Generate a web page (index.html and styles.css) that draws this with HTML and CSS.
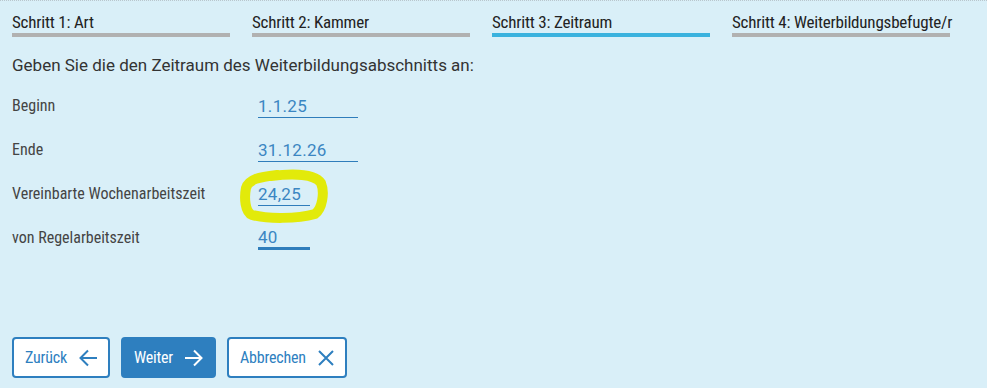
FILE: index.html
```html
<!DOCTYPE html>
<html lang="de">
<head>
  <meta charset="UTF-8">
  <meta name="viewport" content="width=device-width, initial-scale=1.0">
  <title>Weiterbildungsabschnitt</title>
  <link rel="stylesheet" href="styles.css">
</head>
<body>
  <div class="wizard">
    <div class="steps">
      <div class="step">Schritt 1: Art</div>
      <div class="step">Schritt 2: Kammer</div>
      <div class="step active">Schritt 3: Zeitraum</div>
      <div class="step">Schritt 4: Weiterbildungsbefugte/r</div>
    </div>

    <p class="intro">Geben Sie die den Zeitraum des Weiterbildungsabschnitts an:</p>

    <div class="form">
      <div class="row">
        <label for="beginn">Beginn</label>
        <input id="beginn" class="field" type="text" value="1.1.25">
      </div>
      <div class="row">
        <label for="ende">Ende</label>
        <input id="ende" class="field" type="text" value="31.12.26">
      </div>
      <div class="row">
        <label for="woche">Vereinbarte Wochenarbeitszeit</label>
        <div class="marked">
          <input id="woche" class="field short" type="text" value="24,25">
          <!-- hand-drawn marker around the value -->
          <svg class="scribble" width="92" height="56" viewBox="0 0 92 56">
            <path d="M32 7 C55 4 76 5 82 14 C86 24 83 40 76 45 C58 50 28 50 13 46 C6 43 5 29 7 19 C10 10 20 8 38 6"
                  fill="none" stroke="#e2ea0a" stroke-width="10" stroke-linecap="round"/>
          </svg>
        </div>
      </div>
      <div class="row">
        <label for="regel">von Regelarbeitszeit</label>
        <input id="regel" class="field short focus" type="text" value="40">
      </div>
    </div>

    <div class="actions">
      <button class="btn">Zurück
        <svg width="18" height="18" viewBox="0 0 18 18"><path d="M18 9H1.5M9 1.5L1.5 9 9 16.5" fill="none" stroke="currentColor" stroke-width="2"/></svg>
      </button>
      <button class="btn primary">Weiter
        <svg width="18" height="18" viewBox="0 0 18 18"><path d="M0 9h16.5M9 1.5L16.5 9 9 16.5" fill="none" stroke="currentColor" stroke-width="2"/></svg>
      </button>
      <button class="btn">Abbrechen
        <svg width="16" height="16" viewBox="0 0 16 16"><path d="M1 1l14 14M15 1L1 15" fill="none" stroke="currentColor" stroke-width="2"/></svg>
      </button>
    </div>
  </div>
</body>
</html>
```

FILE: styles.css
```css
body {
  margin: 0;
  padding: 0;
  background-color: #d9eff8;
  color: #333;
  font-family: Roboto, sans-serif;
}
.wizard {
  height: 388px;
  box-sizing: border-box;
  border-top: 1px dotted #b9c6cd;
  padding: 0 12px;
  display: flex;
  flex-direction: column;
}
.steps {
  display: grid;
  grid-template-columns: repeat(4, 218px);
  column-gap: 22px;
  padding-top: 11px;
}
.step {
  font-family: 'Roboto Condensed', sans-serif;
  font-size: 17px;
  line-height: 20px;
  letter-spacing: -0.2px;
  color: #222;
  white-space: nowrap;
  padding-bottom: 1px;
  border-bottom: 4px solid #b1b1b1;
}
.step.active {
  border-bottom-color: #3ab2de;
}
.intro {
  font-size: 17px;
  color: #333;
  margin: 18px 0 0;
  line-height: 20px;
}
.form {
  margin-top: -1px;
}
.row {
  display: flex;
  align-items: flex-end;
  height: 44px;
}
.row label {
  width: 246px;
  font-family: 'Roboto Condensed', sans-serif;
  font-size: 16px;
  color: #444;
  padding-bottom: 3px;
}
.field {
  font-family: Roboto, sans-serif;
  font-size: 17px;
  letter-spacing: 0.3px;
  color: #3b86c2;
  background: transparent;
  border: none;
  border-bottom: 1px solid #2f7dbb;
  padding: 0 0 1px;
  width: 100px;
  outline: none;
}
.field.short {
  width: 52px;
}
.field.focus {
  border-bottom-width: 3px;
  padding-bottom: 0;
}
.marked {
  position: relative;
}
.scribble {
  position: absolute;
  left: -19px;
  top: -15px;
  pointer-events: none;
}
.actions {
  margin-top: auto;
  margin-bottom: 10px;
  display: flex;
  gap: 11px;
}
.btn {
  display: flex;
  align-items: center;
  gap: 12px;
  height: 41px;
  padding: 0 11px;
  border: 2px solid #2e7fbf;
  border-radius: 4px;
  background: #fff;
  color: #2e7fbf;
  font-family: 'Roboto Condensed', sans-serif;
  font-size: 16px;
  letter-spacing: -0.2px;
}
.btn.primary {
  background: #2e7fbf;
  color: #fff;
}
```
